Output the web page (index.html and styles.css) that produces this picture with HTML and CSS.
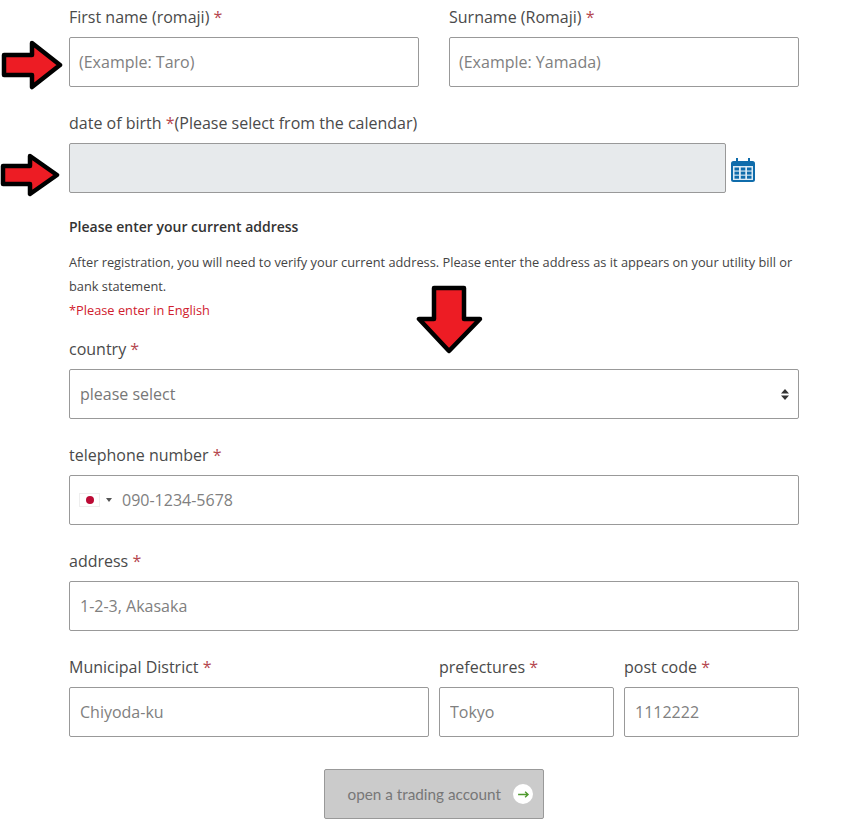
FILE: index.html
```html
<!DOCTYPE html>
<html lang="en">
<head>
  <meta charset="UTF-8" />
  <title>Open a trading account</title>
  <link rel="stylesheet" href="styles.css">
</head>
<body>
  <form class="form">
    <div class="row row-half">
      <div class="field">
        <label>First name (romaji) <span class="req">*</span></label>
        <input type="text" placeholder="(Example: Taro)">
      </div>
      <div class="field">
        <label>Surname (Romaji) <span class="req">*</span></label>
        <input type="text" placeholder="(Example: Yamada)">
      </div>
    </div>

    <div class="field field-date">
      <label>date of birth <span class="req">*</span>(Please select from the calendar)</label>
      <div class="date-row">
        <input type="text" class="date-input" readonly>
        <svg class="calendar" viewBox="0 0 24 24">
          <rect x="0" y="3" width="24" height="21" rx="2.5" fill="#0f6cab"/>
          <rect x="5" y="0" width="2" height="6" fill="#0f6cab"/>
          <rect x="17" y="0" width="2" height="6" fill="#0f6cab"/>
          <rect x="2" y="8" width="20" height="14" fill="#dcebf5"/>
          <g fill="#0f6cab">
            <rect x="3.5" y="9.5" width="4.5" height="3"/>
            <rect x="9.8" y="9.5" width="4.5" height="3"/>
            <rect x="16" y="9.5" width="4.5" height="3"/>
            <rect x="3.5" y="13.6" width="4.5" height="3"/>
            <rect x="9.8" y="13.6" width="4.5" height="3"/>
            <rect x="16" y="13.6" width="4.5" height="3"/>
            <rect x="3.5" y="17.7" width="4.5" height="3"/>
            <rect x="9.8" y="17.7" width="4.5" height="3"/>
            <rect x="16" y="17.7" width="4.5" height="3"/>
          </g>
        </svg>
      </div>
    </div>

    <div class="notice">
      <h4>Please enter your current address</h4>
      <p>After registration, you will need to verify your current address. Please enter the address as it appears on your utility bill or bank statement.</p>
      <p class="notice-red">*Please enter in English</p>
    </div>

    <div class="field">
      <label>country <span class="req">*</span></label>
      <div class="select-wrap">
        <select>
          <option>please select</option>
        </select>
        <svg class="select-arrows" viewBox="0 0 8 11">
          <path d="M4 0 L8 4.4 H0 Z M4 11 L0 6.6 H8 Z" fill="#333"/>
        </svg>
      </div>
    </div>

    <div class="field">
      <label>telephone number <span class="req">*</span></label>
      <div class="phone-wrap">
        <div class="flag-box">
          <span class="flag"><span class="flag-dot"></span></span>
          <span class="flag-caret"></span>
        </div>
        <input type="text" class="phone-input" placeholder="090-1234-5678">
      </div>
    </div>

    <div class="field">
      <label>address <span class="req">*</span></label>
      <input type="text" placeholder="1-2-3, Akasaka">
    </div>

    <div class="row row-address">
      <div class="field">
        <label>Municipal District <span class="req">*</span></label>
        <input type="text" placeholder="Chiyoda-ku">
      </div>
      <div class="field">
        <label>prefectures <span class="req">*</span></label>
        <input type="text" placeholder="Tokyo">
      </div>
      <div class="field">
        <label>post code <span class="req">*</span></label>
        <input type="text" placeholder="1112222">
      </div>
    </div>

    <div class="submit-row">
      <button type="button" class="submit-btn">
        open a trading account
        <span class="btn-circle">
          <svg viewBox="0 0 14 10"><path d="M1 5 H12 M8.8 2 L12 5 L8.8 8" fill="none" stroke="#4f9a2e" stroke-width="1.6"/></svg>
        </span>
      </button>
    </div>
  </form>

  <!-- red arrows drawn over the form -->
  <svg class="arrow arrow-first" viewBox="0 0 64 50"><polygon points="3,15 31,15 31,3 59,25 31,47 31,35 3,35"/></svg>
  <svg class="arrow arrow-dob" viewBox="0 0 62 44"><polygon points="3,13 30,13 30,3 57,22 30,41 30,31 3,31"/></svg>
  <svg class="arrow arrow-country" viewBox="0 0 68 70"><polygon points="18,3 48,3 48,34 64,34 33,66 3,34 18,34"/></svg>
</body>
</html>
```

FILE: styles.css
```css
* { box-sizing: border-box; }

body {
  margin: 0;
  position: relative;
  font-family: "Open Sans", Arial, sans-serif;
  color: #444;
  background-color: #fff;
}

.form {
  padding: 7px 60px 14px 69px;
}

.row {
  display: flex;
}

.row-half {
  gap: 30px;
}

.row-half .field {
  flex: 1;
}

.row-half input {
  padding-left: 9px;
}

.row-address {
  gap: 10px;
}

.row-address .field {
  width: 175px;
}

.row-address .field:first-child {
  width: 360px;
}

.field {
  margin-bottom: 26px;
}

.field-date {
  margin-bottom: 24px;
}

label {
  display: block;
  height: 20px;
  line-height: 20px;
  margin-bottom: 10px;
  font-size: 16px;
  color: #4a4a4a;
}

.req {
  color: #b5474f;
}

input,
select {
  display: block;
  width: 100%;
  height: 50px;
  padding: 0 10px;
  border: 1px solid #999;
  border-radius: 2px;
  background-color: #fff;
  font-family: "Open Sans", Arial, sans-serif;
  font-size: 16px;
  color: #777;
  outline: none;
}

input::placeholder {
  color: #808080;
  opacity: 1;
}

.date-row {
  display: flex;
  align-items: center;
  gap: 5px;
}

.date-input {
  width: 657px;
  background-color: #e7eaec;
}

.calendar {
  width: 24px;
  height: 24px;
  margin-top: 4px;
}

.notice {
  margin-bottom: 17px;
}

.notice h4 {
  margin: 0 0 13px;
  font-family: "Open Sans", Arial, sans-serif;
  font-size: 14px;
  line-height: 20px;
  font-weight: 600;
  color: #333;
}

.notice p {
  margin: 0;
  font-size: 12.8px;
  line-height: 24px;
  color: #444;
}

.notice .notice-red {
  color: #d0202e;
}

.select-wrap,
.phone-wrap {
  position: relative;
}

select {
  appearance: none;
}

.select-arrows {
  position: absolute;
  top: 20px;
  right: 10px;
  width: 8px;
  height: 11px;
}

.phone-input {
  padding-left: 52px;
}

.flag-box {
  position: absolute;
  top: 18px;
  left: 10px;
  display: flex;
  align-items: center;
  gap: 6px;
}

.flag {
  display: flex;
  align-items: center;
  justify-content: center;
  width: 21px;
  height: 14px;
  background-color: #fff;
  border: 1px solid #eee;
}

.flag-dot {
  width: 8px;
  height: 8px;
  border-radius: 50%;
  background-color: #bc0a35;
}

.flag-caret {
  width: 0;
  height: 0;
  border-left: 3px solid transparent;
  border-right: 3px solid transparent;
  border-top: 4px solid #555;
}

.submit-row {
  display: flex;
  justify-content: center;
  margin-top: 6px;
}

.submit-btn {
  display: flex;
  align-items: center;
  justify-content: flex-end;
  gap: 12px;
  width: 220px;
  height: 50px;
  padding: 0 10px 0 0;
  border: 1px solid #999;
  border-radius: 2px;
  background-color: #cbcbcb;
  font-family: "Lato", Arial, sans-serif;
  font-size: 15.3px;
  color: #777;
}

.btn-circle {
  display: flex;
  align-items: center;
  justify-content: center;
  width: 20px;
  height: 20px;
  border-radius: 50%;
  background-color: #fff;
}

.btn-circle svg {
  width: 13px;
  height: 9px;
}

.arrow {
  position: absolute;
  fill: #ed1c24;
  stroke: #000;
  stroke-width: 4.5;
  stroke-linejoin: round;
}

.arrow-first {
  left: 1px;
  top: 40px;
  width: 64px;
  height: 50px;
}

.arrow-dob {
  left: 0;
  top: 153px;
  width: 62px;
  height: 44px;
}

.arrow-country {
  left: 416px;
  top: 285px;
  width: 68px;
  height: 70px;
}
```
